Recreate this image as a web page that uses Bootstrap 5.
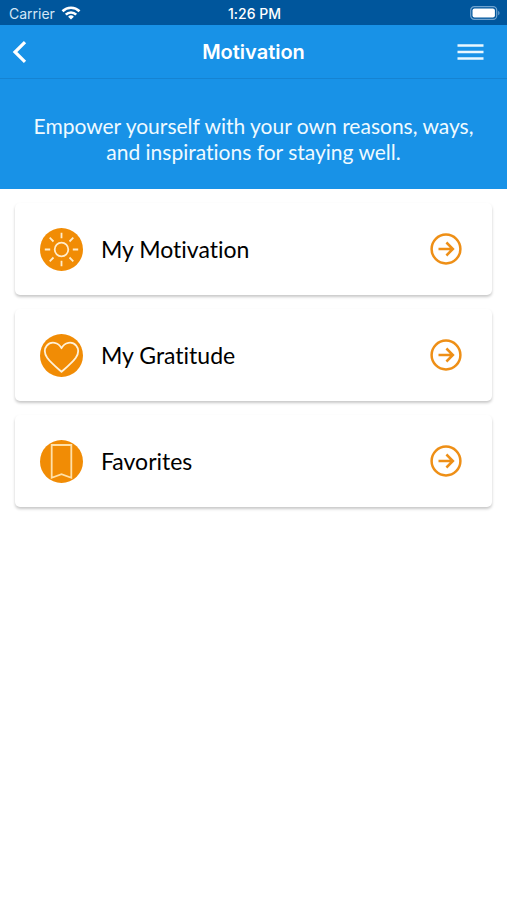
<!DOCTYPE html>
<html lang="en">
<head>
<meta charset="utf-8">
<meta name="viewport" content="width=device-width, initial-scale=1">
<title>Motivation</title>
<link rel="stylesheet" href="https://cdn.jsdelivr.net/npm/bootstrap@5.3.0/dist/css/bootstrap.min.css">
<style>
  body { font-family: Lato, "Open Sans", sans-serif; font-variant-ligatures: none; background: #fff; }
  .ios-text { font-family: Inter, Roboto, sans-serif; }
  .status-strip { background: #00569c; height: 25px; font-size: 14px; line-height: 25px; padding: 1px 7px 0 9px; }
  .carrier { color: #d3e6f6; gap: 6px; }
  .clock { font-weight: 500; }
  .title-bar { background: #1892e7; height: 54px; border-bottom: 1px solid #1583d2; padding: 0 12px; }
  .title-bar h1 { font-size: 20px; line-height: 24px; font-weight: 600; }
  .title-bar .btn { line-height: 1; padding: 0; }
  .title-bar .menu-btn { padding-right: 11px; }
  .intro { background: #1892e7; color: #effaff; padding: 34px 20px 24px; font-size: 21px; line-height: 26px; }
  .menu-list { padding: 14px 15px; gap: 14px; }
  .menu-card { height: 92px; padding: 0 30px 0 25px; gap: 18px; border-radius: 5px; color: #000; font-size: 23px; line-height: 30px; box-shadow: 0 2px 3px rgba(0, 0, 0, .22); }
</style>
<script src="https://cdn.jsdelivr.net/npm/bootstrap@5.3.0/dist/js/bootstrap.bundle.min.js" defer></script>
</head>
<body>
<header class="text-white">
  <div class="status-strip ios-text d-flex align-items-center">
    <div class="carrier col d-flex align-items-center">
      <span>Carrier</span>
      <svg width="20" height="14" viewBox="0 0 20 14" fill="none" stroke="#fff" stroke-width="2.6" aria-hidden="true"><path d="M1.5 5.2a12.2 12.2 0 0 1 17 0M4.8 8.6a7.4 7.4 0 0 1 10.4 0"/><path d="M10 13.6 7.1 10.7a4.1 4.1 0 0 1 5.8 0Z" fill="#fff" stroke="none"/></svg>
    </div>
    <div class="clock">1:26 PM</div>
    <div class="col d-flex justify-content-end">
      <svg width="30" height="14" viewBox="0 0 30 14" role="img" aria-label="Battery full"><rect x=".7" y=".7" width="26" height="12.6" rx="3.6" fill="none" stroke="#6fa3cf" stroke-width="1.2"/><rect x="2.5" y="2.5" width="22.4" height="9" rx="2" fill="#fff"/><path d="M28.2 4.7c1.8.8 1.8 3.8 0 4.6Z" fill="#6fa3cf"/></svg>
    </div>
  </div>
  <nav class="title-bar d-flex align-items-center justify-content-between" aria-label="Main">
    <div class="col d-flex"><button type="button" class="btn border-0" aria-label="Back"><svg width="16" height="22" viewBox="0 0 16 22" fill="none" stroke="#fff" stroke-width="3.2"><path d="M13 1.2 3 11l10 9.8"/></svg></button></div>
    <h1 class="ios-text m-0">Motivation</h1>
    <div class="col d-flex justify-content-end"><button type="button" class="btn menu-btn border-0" aria-label="Menu"><svg width="27" height="18" viewBox="0 0 27 18" stroke="#e9f8ff" stroke-width="2.4"><path d="M.5 2.5h26M.5 9h26M.5 15.5h26"/></svg></button></div>
  </nav>
  <p class="intro text-center m-0">Empower yourself with your own reasons, ways, and inspirations for staying well.</p>
</header>
<main class="menu-list d-flex flex-column">
  <a href="#motivation" class="menu-card d-flex align-items-center text-decoration-none bg-white">
    <svg width="43" height="43" viewBox="0 0 43 43" fill="none" stroke="#ffeccb" stroke-width="1.8" aria-hidden="true"><circle cx="21.5" cy="21.5" r="21.5" fill="#f18c05" stroke="none"/><circle cx="21.5" cy="21.5" r="6.8"/><path d="M21.5 4.8v5.4M21.5 32.8v5.4M4.8 21.5h5.4M32.8 21.5h5.4M9.7 9.7l3.8 3.8M29.5 29.5l3.8 3.8M33.3 9.7l-3.8 3.8M13.5 29.5l-3.8 3.8"/></svg>
    <span class="flex-grow-1">My Motivation</span>
    <svg width="32" height="32" viewBox="0 0 32 32" fill="none" stroke="#ee8f16" stroke-width="2.5" aria-hidden="true"><circle cx="16" cy="16" r="14.4"/><path d="M8.5 16h14M16.4 9.5l6.5 6.5-6.5 6.5"/></svg>
  </a>
  <a href="#gratitude" class="menu-card d-flex align-items-center text-decoration-none bg-white">
    <svg width="43" height="43" viewBox="0 0 43 43" fill="none" stroke="#fff1d8" stroke-width="1.8" stroke-linejoin="round" aria-hidden="true"><circle cx="21.5" cy="21.5" r="21.5" fill="#f18c05" stroke="none"/><path d="M21.5 37.8C16 33 10.500 28.500 7.200 23.800 4.400 19.600 4.200 14.800 6.800 11.600 11 6.700 18.500 8.200 21.500 14.200 24.500 8.200 32 6.700 36.200 11.600 38.800 14.800 38.600 19.600 35.800 23.800 32.500 28.500 27 33 21.500 37.800Z"/></svg>
    <span class="flex-grow-1">My Gratitude</span>
    <svg width="32" height="32" viewBox="0 0 32 32" fill="none" stroke="#ee8f16" stroke-width="2.5" aria-hidden="true"><circle cx="16" cy="16" r="14.4"/><path d="M8.5 16h14M16.4 9.5l6.5 6.5-6.5 6.5"/></svg>
  </a>
  <a href="#favorites" class="menu-card d-flex align-items-center text-decoration-none bg-white">
    <svg width="43" height="43" viewBox="0 0 43 43" fill="none" stroke="#ffe0a8" stroke-width="1.8" aria-hidden="true"><circle cx="21.5" cy="21.5" r="21.5" fill="#f18c05" stroke="none"/><path d="M11.700 5h19.600v32.800l-9.800-3.600-9.800 3.600Z"/></svg>
    <span class="flex-grow-1">Favorites</span>
    <svg width="32" height="32" viewBox="0 0 32 32" fill="none" stroke="#ee8f16" stroke-width="2.5" aria-hidden="true"><circle cx="16" cy="16" r="14.4"/><path d="M8.5 16h14M16.4 9.5l6.5 6.5-6.5 6.5"/></svg>
  </a>
</main>
</body>
</html>
